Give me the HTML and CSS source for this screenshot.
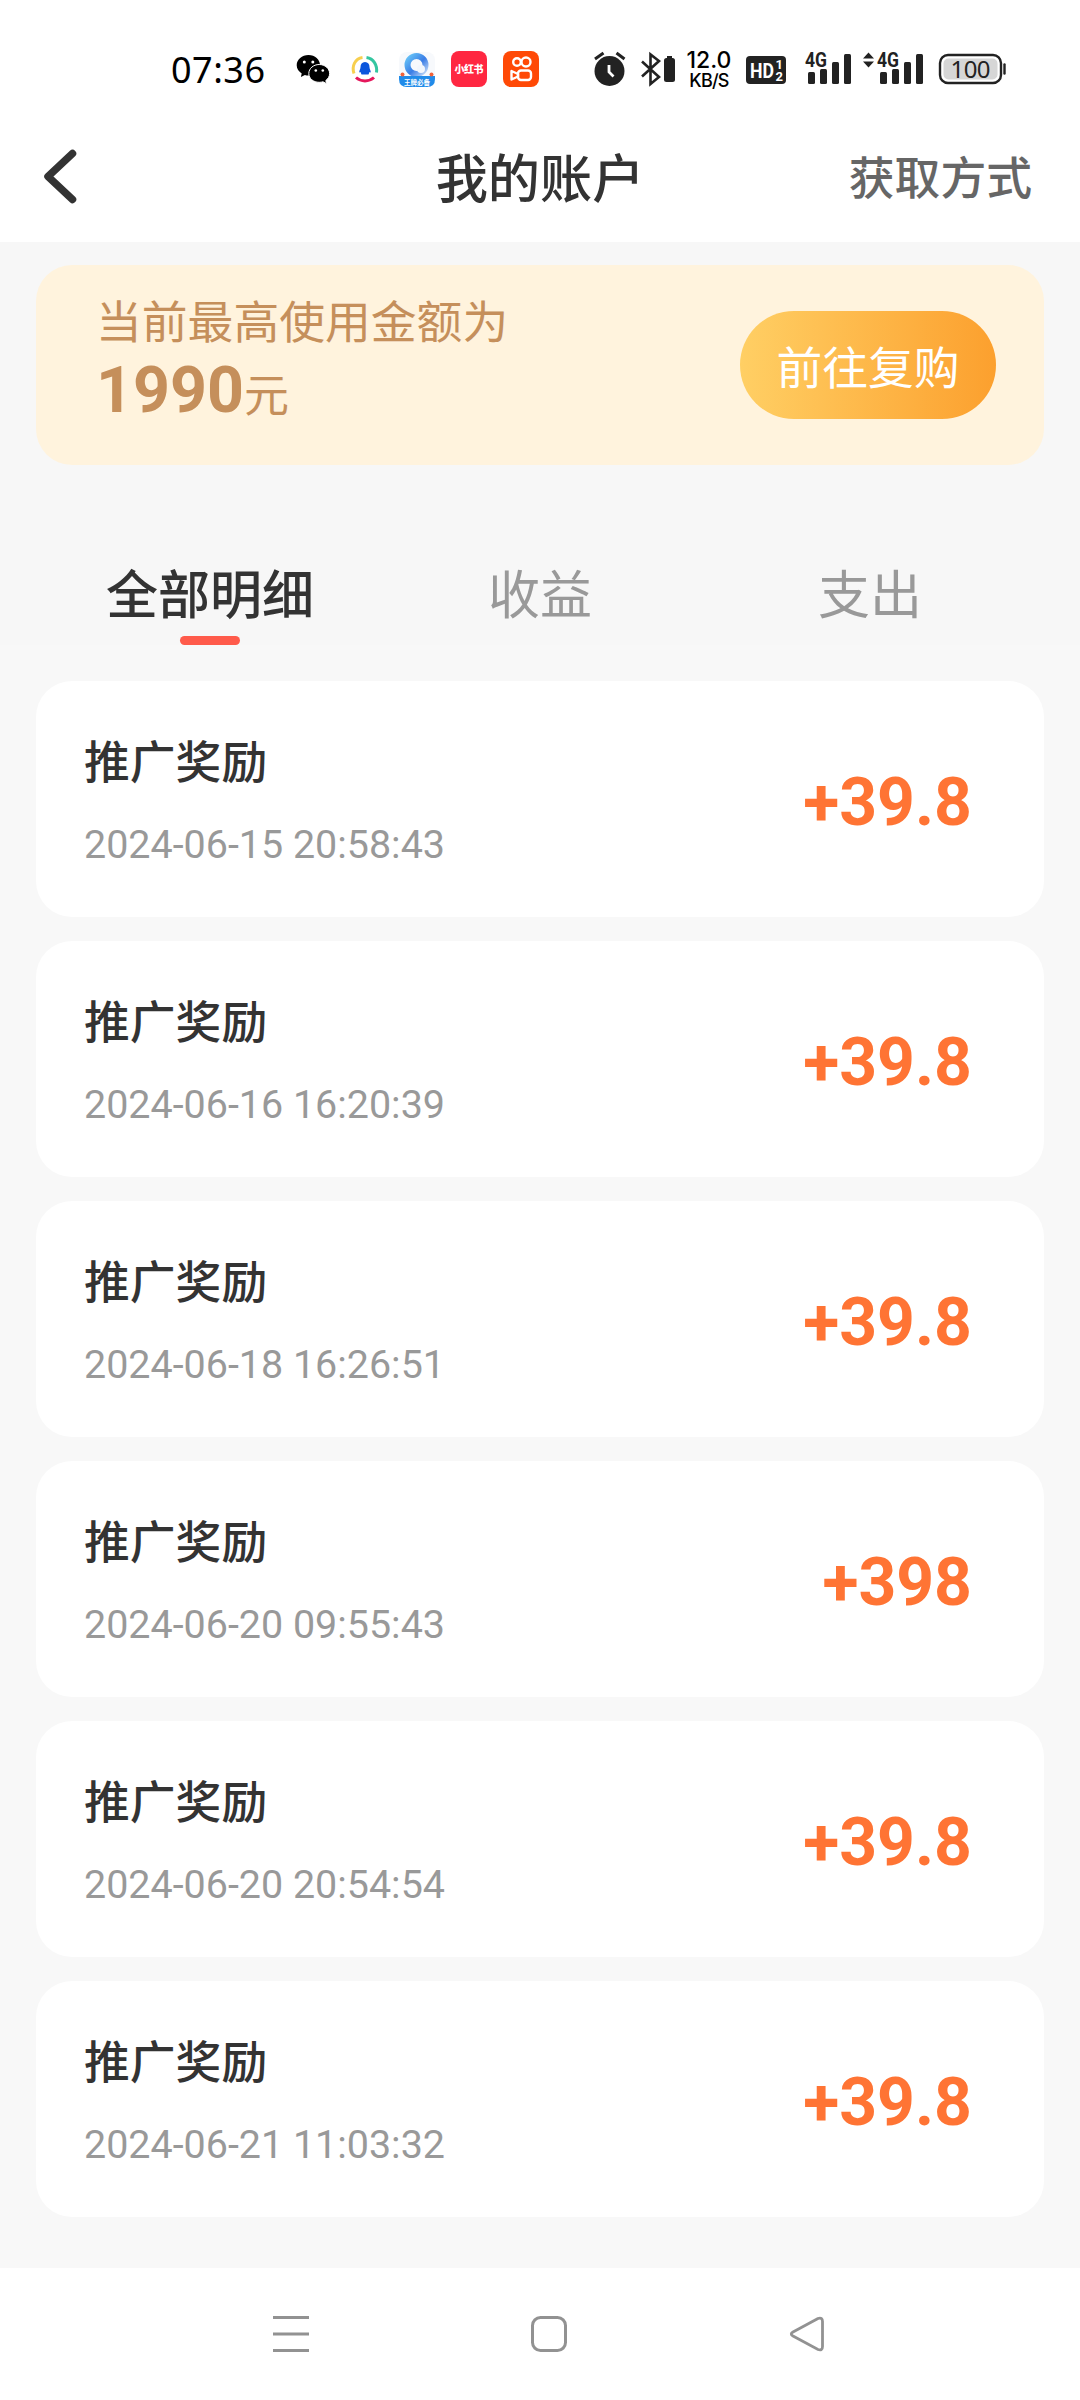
FILE: index.html
```html
<!DOCTYPE html>
<html lang="zh-CN">
<head>
<meta charset="utf-8">
<title>我的账户</title>
<link rel="stylesheet" href="styles.css">
</head>
<body>
<div class="statusbar">
  <span class="clock">07:36</span>
  <svg class="ico-wechat" width="36" height="60" viewBox="296 40 36 60">
    <path d="M308.500 55c6.500 0 11.500 4.500 11.500 10.200s-5 10.300-11.500 10.300q-2 0-3.600-.5l-4 2 .8-3.600c-3-2-5-4.700-5-8.200C296.700 59.500 302 55 308.500 55z" fill="#000"/>
    <path d="M319.200 64.500c5.800 0 10.400 4 10.400 9 0 2.900-1.500 5.300-3.800 7l.8 3.200-3.600-1.900q-1.800.5-3.800.5c-5.800 0-10.400-3.800-10.400-8.800s4.600-9 10.400-9z" fill="#000" stroke="#fff" stroke-width="1"/>
    <g fill="#fff"><circle cx="304.300" cy="62" r="1.500"/><circle cx="312.800" cy="62" r="1.500"/><circle cx="315.800" cy="70.500" r="1.300"/><circle cx="322.800" cy="70.500" r="1.300"/></g>
  </svg>
  <svg class="ico-ring" width="30" height="60" viewBox="350 40 30 60">
    <g fill="none" stroke-width="3">
      <path d="M354 73.500C351.500 66 355 58.500 362.500 57.500" stroke="#f7cf4e"/>
      <path d="M366.500 57.500C373.500 58.500 377.500 65 376.500 72.500" stroke="#34c6a0"/>
      <path d="M356 77.500C361 82 369 82 374 77.500" stroke="#e5175c"/>
    </g>
    <path d="M365 62c3 0 4.500 2.200 4.500 5.200 0 1.800 1.300 3 1.300 5.300l-1.300-.5-1 2.500h-7l-1-2.500-1.300.5c0-2.300 1.300-3.500 1.300-5.300 0-3 1.500-5.200 4.500-5.200z" fill="#0b55dd"/>
  </svg>
  <svg class="ico-browser" width="36" height="60" viewBox="399 40 36 60">
    <defs><linearGradient id="q" x1="0" y1="0" x2="1" y2="1"><stop offset="0" stop-color="#67c4f7"/><stop offset=".55" stop-color="#3a7de6"/><stop offset="1" stop-color="#bed6f7"/></linearGradient></defs>
    <rect x="399" y="52" width="36" height="34" rx="8" fill="#f7f9fc"/>
    <circle cx="416.500" cy="65" r="9" fill="none" stroke="url(#q)" stroke-width="6"/>
    <circle cx="421" cy="69" r="4" fill="#f2f6fc"/>
    <path d="M399 76h36v3q0 8-8 8h-20q-8 0-8-8z" fill="#218be9"/>
    <circle cx="402.500" cy="74.500" r="2" fill="#f1623a"/><circle cx="431.500" cy="74.500" r="2" fill="#f1623a"/>
    <text x="417" y="85" font-size="6.500" font-weight="700" text-anchor="middle" fill="#fff">王牌必备</text>
  </svg>
  <svg class="ico-xhs" width="36" height="60" viewBox="451 40 36 60">
    <rect x="451" y="51" width="36" height="36" rx="8" fill="#ff2741"/>
    <text x="469" y="73" font-size="10" font-weight="900" text-anchor="middle" fill="#fff" textLength="29">小红书</text>
  </svg>
  <svg class="ico-ks" width="36" height="60" viewBox="503 40 36 60">
    <rect x="503" y="51" width="36" height="36" rx="8" fill="#ff4906"/>
    <g fill="none" stroke="#fff" stroke-width="2.400">
      <circle cx="517" cy="62" r="3.800"/><circle cx="526" cy="62" r="4.500"/>
      <rect x="518" y="70.500" width="13" height="9.500" rx="3"/>
      <path d="M518 74l-6.500-3v8.500l6.500-3z" stroke-linejoin="round"/>
    </g>
  </svg>
  <svg class="ico-alarm" width="33" height="60" viewBox="593 40 33 60">
    <circle cx="609.500" cy="71" r="15" fill="#222"/>
    <path d="M595 59l8.500-6M624.500 59l-8-6" stroke="#222" stroke-width="3" fill="none"/>
    <path d="M609 65v7l4.500 4.500" stroke="#fff" stroke-width="2.800" fill="none"/>
  </svg>
  <svg class="ico-bt" width="36" height="60" viewBox="640 40 36 60">
    <path d="M642 61.500l17 15.500-8.500 7V54.500l8.500 6.500-17 15.500" fill="none" stroke="#222" stroke-width="2.600"/>
    <path d="M667 56h5v2h-5z" fill="#222"/><rect x="664" y="58" width="11" height="24" rx="2.500" fill="#222"/>
  </svg>
  <span class="speed"><b>12.0</b><i>KB/S</i></span>
  <svg class="ico-hd" width="40" height="60" viewBox="746 40 40 60">
    <rect x="746" y="56" width="40" height="28" rx="4" fill="#222"/>
    <g fill="#fff" font-family="Roboto, sans-serif" font-weight="700"><text x="750" y="77.500" font-size="21" textLength="24" lengthAdjust="spacingAndGlyphs">HD</text><text x="775.500" y="69" font-size="13">1</text><text x="775.500" y="81" font-size="13">2</text></g>
  </svg>
  <svg class="ico-sig1" width="47" height="60" viewBox="804 40 47 60">
    <text class="net" x="805" y="67" textLength="22" lengthAdjust="spacingAndGlyphs">4G</text>
    <g fill="#222"><rect x="808" y="72" width="7" height="12" rx="1.500"/><rect x="820" y="69" width="7" height="15" rx="1.500"/><rect x="832" y="62" width="7" height="22" rx="1.500"/><rect x="844" y="54" width="7" height="30" rx="1.500"/></g>
  </svg>
  <svg class="ico-sig2" width="61" height="60" viewBox="862 40 61 60">
    <path d="M863 58.500l5.500-6 5.500 6zM863 61.500l5.500 6 5.500-6z" fill="#222"/>
    <text class="net" x="877" y="67" textLength="22" lengthAdjust="spacingAndGlyphs">4G</text>
    <g fill="#222"><rect x="880" y="72" width="7" height="12" rx="1.500"/><rect x="892" y="69" width="7" height="15" rx="1.500"/><rect x="904" y="62" width="7" height="22" rx="1.500"/><rect x="916" y="54" width="7" height="30" rx="1.500"/></g>
  </svg>
  <svg class="ico-batt" width="68" height="60" viewBox="938 40 68 60">
    <rect x="940" y="55" width="61" height="28" rx="8" fill="#fff" stroke="#222" stroke-width="2.400"/>
    <rect x="943.500" y="58.500" width="54" height="21" rx="5" fill="#d6d6d6"/>
    <path d="M1004.500 64.500v9" stroke="#222" stroke-width="2.400" stroke-linecap="round"/>
    <text x="970.500" y="77.500" font-size="24" font-family="Noto Sans, sans-serif" text-anchor="middle" fill="#222" textLength="40">100</text>
  </svg>
</div>

<header class="header">
  <svg class="back" width="80" height="60" viewBox="0 0 80 60"><path d="M72.500 7.500L48 30.500l24.500 23" fill="none" stroke="#333" stroke-width="7.500" stroke-linecap="round" stroke-linejoin="round"/></svg>
  <h1 class="title">我的账户</h1>
  <a class="method">获取方式</a>
</header>

<main class="main">
  <div class="summary">
    <section class="banner">
      <div class="banner-info">
        <p class="banner-label">当前最高使用金额为</p>
        <p class="banner-value"><b>1990</b>元</p>
      </div>
      <button class="buy">前往复购</button>
    </section>

    <nav class="tabs">
      <span class="tab active">全部明细</span>
      <span class="tab">收益</span>
      <span class="tab">支出</span>
    </nav>
  </div>

  <section class="list">
    <article class="card"><div><h2>推广奖励</h2><time>2024-06-15 20:58:43</time></div><strong>+39.8</strong></article>
    <article class="card"><div><h2>推广奖励</h2><time>2024-06-16 16:20:39</time></div><strong>+39.8</strong></article>
    <article class="card"><div><h2>推广奖励</h2><time>2024-06-18 16:26:51</time></div><strong>+39.8</strong></article>
    <article class="card"><div><h2>推广奖励</h2><time>2024-06-20 09:55:43</time></div><strong>+398</strong></article>
    <article class="card"><div><h2>推广奖励</h2><time>2024-06-20 20:54:54</time></div><strong>+39.8</strong></article>
    <article class="card"><div><h2>推广奖励</h2><time>2024-06-21 11:03:32</time></div><strong>+39.8</strong></article>
  </section>
</main>

<footer class="navbar">
  <svg width="36" height="36" viewBox="0 0 36 36"><path d="M0 1.500h36M0 18h36M0 34.500h36" stroke="#929292" stroke-width="3"/></svg>
  <svg width="36" height="36" viewBox="0 0 36 36"><rect x="1.500" y="1.500" width="33" height="33" rx="8" fill="none" stroke="#929292" stroke-width="3"/></svg>
  <svg width="36" height="36" viewBox="0 0 36 36"><path d="M29 2.500L4 16q-3.500 2 0 4l25 13.500q4.500 1.500 4.500-3V5.500q0-4.500-4.500-3z" fill="none" stroke="#929292" stroke-width="2.800"/></svg>
</footer>
</body>
</html>
```
FILE: styles.css
```css
* { box-sizing: border-box; margin: 0; padding: 0; }

body {
  width: 1080px;
  height: 2400px;
  display: flex;
  flex-direction: column;
  background: #fff;
  color: #333;
  font-family: Roboto, "Noto Sans CJK SC", sans-serif;
}

svg { display: block; flex: none; }

/* status bar */
.statusbar {
  height: 110px;
  padding: 40px 0 0 171px;
  display: flex;
  align-items: flex-start;
  overflow: hidden;
}
.clock {
  width: 125px;
  font: 400 36px/60px "Noto Sans", sans-serif;
  letter-spacing: .5px;
  color: #000;
}
.ico-ring { margin-left: 18px; }
.ico-browser { margin-left: 19px; }
.ico-xhs, .ico-ks { margin-left: 16px; }
.ico-alarm { margin-left: 54px; }
.ico-bt { margin-left: 14px; }
.speed {
  width: 48px;
  margin-left: 9px;
  padding-top: 10px;
  display: flex;
  flex-direction: column;
  align-items: center;
  color: #000;
  font-family: Inter, sans-serif;
}
.speed b { font-size: 23px; line-height: 21px; font-weight: 500; }
.speed i { font-size: 18px; line-height: 19px; font-weight: 500; font-style: normal; letter-spacing: -.8px; }
.ico-hd { margin-left: 13px; }
.ico-sig1 { margin-left: 18px; }
.ico-sig2 { margin-left: 11px; }
.ico-batt { margin-left: 15px; }
.net { font: 700 21px Roboto, sans-serif; fill: #222; }

/* page header */
.header {
  height: 132px;
  display: grid;
  grid-template-columns: 1fr auto 1fr;
  align-items: center;
}
.title { padding-top: 9px; font-size: 52.200px; line-height: 76px; font-weight: 500; }
.method {
  justify-self: end;
  padding: 8px 48px 0 0;
  font-size: 45.800px;
  line-height: 66px;
  font-weight: 500;
  color: #666;
}

.main { height: 2026px; background: #f8f8f8; }
.summary { height: 403px; padding-top: 23px; background: #f7f7f7; }

/* amount banner */
.banner {
  height: 200px;
  margin: 0 36px;
  padding: 26px 48px 0 60px;
  display: flex;
  justify-content: space-between;
  align-items: flex-start;
  border-radius: 36px;
  background: #fff3dd;
  color: #c58f5b;
}
.banner-label { font-size: 45.800px; line-height: 66px; }
.banner-value { font-size: 45px; line-height: 66px; }
.banner-value b { font-size: 64.500px; }
.buy {
  width: 256px;
  height: 108px;
  margin-top: 20px;
  border: 0;
  border-radius: 54px;
  background: linear-gradient(90deg, #ffcf64, #fca02e);
  color: #fff;
  font: 400 45.800px/108px "Noto Sans CJK SC", sans-serif;
}

/* tabs */
.tabs {
  padding: 94px 45px 0;
  display: grid;
  grid-template-columns: repeat(3, 1fr);
}
.tab {
  display: flex;
  flex-direction: column;
  align-items: center;
  font-size: 52px;
  line-height: 76px;
  color: #999;
}
.tab.active { color: #333; font-weight: 500; }
.tab.active::after {
  content: "";
  width: 60px;
  height: 9px;
  margin-top: 1px;
  border-radius: 4.500px;
  background: #ff5b4b;
}

/* records */
.list {
  padding: 36px 36px 0;
  display: flex;
  flex-direction: column;
  gap: 24px;
}
.card {
  height: 236px;
  padding: 50px 72px 0 48px;
  display: flex;
  justify-content: space-between;
  border-radius: 36px;
  background: #fff;
}
.card h2 { font-size: 45.800px; line-height: 66px; font-weight: 500; }
.card time { display: block; margin-top: 19px; font-size: 39.450px; line-height: 58px; color: #999; }
.card strong { padding-top: 34px; font-size: 66px; line-height: 76px; font-weight: 700; color: #ff7434; }

/* system navigation */
.navbar {
  height: 132px;
  padding: 48px 255px 0 273px;
  display: flex;
  justify-content: space-between;
}
```
